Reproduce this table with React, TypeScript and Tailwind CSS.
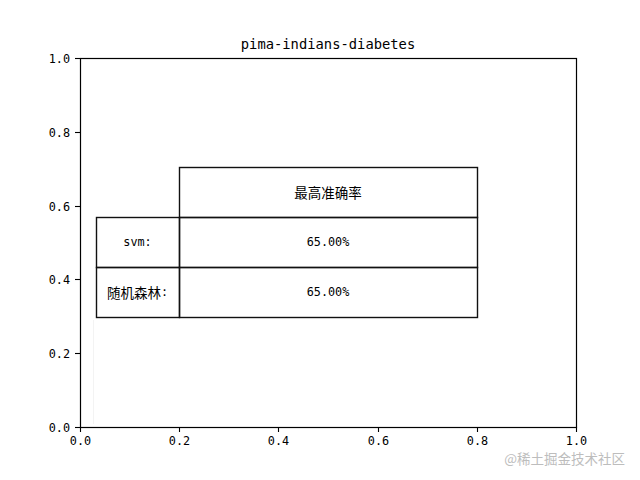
import React from 'react';

const MONO = '"DejaVu Sans Mono", "Liberation Mono", monospace';
const CJK = '"Noto Sans CJK SC", "Noto Sans", sans-serif';

const yTicks = [0, 0.2, 0.4, 0.6, 0.8, 1.0];
const xTicks = [0, 0.2, 0.4, 0.6, 0.8, 1.0];

const X0 = 80;
const X1 = 576;
const Y0 = 427;
const Y1 = 58;

const px = (v: number) => X0 + v * (X1 - X0);
const py = (v: number) => Y0 - v * (Y0 - Y1);

export default function App() {
  return (
    <div className="w-[640px] h-[480px] bg-white overflow-hidden">
      <svg width="640" height="480" viewBox="0 0 640 480">
        {/* title */}
        <text x="328" y="44" textAnchor="middle" dominantBaseline="central" fontFamily={MONO} fontSize="13.8" fill="#000">
          pima-indians-diabetes
        </text>

        {/* faint artifact line */}
        <line x1="93.5" y1="320" x2="93.5" y2="424" stroke="#f3f3f3" strokeWidth="1" />

        {/* table */}
        <g stroke="#111" strokeWidth="1.4" fill="none">
          <rect x="179.5" y="167.5" width="298" height="50" />
          <rect x="96.5" y="217.5" width="83" height="50" />
          <rect x="179.5" y="217.5" width="298" height="50" />
          <rect x="96.5" y="267.5" width="83" height="50" />
          <rect x="179.5" y="267.5" width="298" height="50" />
        </g>
        <text x="328" y="192" textAnchor="middle" dominantBaseline="central" fontFamily={CJK} fontSize="13.5" fill="#000">
          最高准确率
        </text>
        <text x="137.5" y="242" textAnchor="middle" dominantBaseline="central" fontFamily={MONO} fontSize="11.8" fill="#000">
          svm:
        </text>
        <text x="137.5" y="292" textAnchor="middle" dominantBaseline="central" fill="#000">
          <tspan fontFamily={CJK} fontSize="13.5">随机森林</tspan>
          <tspan fontFamily={MONO} fontSize="11.8">:</tspan>
        </text>
        <text x="328" y="242" textAnchor="middle" dominantBaseline="central" fontFamily={MONO} fontSize="11.8" fill="#000">
          65.00%
        </text>
        <text x="328" y="292" textAnchor="middle" dominantBaseline="central" fontFamily={MONO} fontSize="11.8" fill="#000">
          65.00%
        </text>

        {/* axes frame */}
        <rect x="80.5" y="58.5" width="496" height="369" fill="none" stroke="#000" strokeWidth="1.2" />

        {/* y ticks */}
        {yTicks.map((v) => {
          const y = Math.round(py(v)) + 0.5;
          return (
            <g key={'y' + v}>
              <line x1="75" y1={y} x2="80" y2={y} stroke="#000" strokeWidth="1.1" />
              <text x="70" y={y} textAnchor="end" dominantBaseline="central" fontFamily={MONO} fontSize="11.8" fill="#000">
                {v.toFixed(1)}
              </text>
            </g>
          );
        })}

        {/* x ticks */}
        {xTicks.map((v) => {
          const x = Math.round(px(v)) + 0.5;
          return (
            <g key={'x' + v}>
              <line x1={x} y1="427" x2={x} y2="432" stroke="#000" strokeWidth="1.1" />
              <text x={x} y="441" textAnchor="middle" dominantBaseline="central" fontFamily={MONO} fontSize="11.8" fill="#000">
                {v.toFixed(1)}
              </text>
            </g>
          );
        })}

        {/* watermark */}
        <text x="625" y="458" textAnchor="end" dominantBaseline="central" fontFamily={CJK} fontSize="13.5" fill="#bdbdbd">
          @稀土掘金技术社区
        </text>
      </svg>
    </div>
  );
}
